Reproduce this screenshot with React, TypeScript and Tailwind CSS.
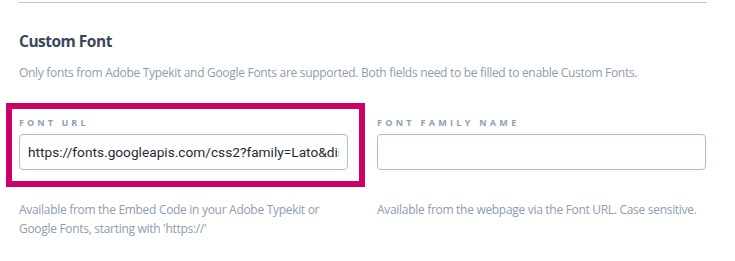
import React from "react";

const App = () => {
  return (
    <div className="relative w-[735px] h-[261px] bg-white overflow-hidden font-['Open_Sans',sans-serif]">
      <div className="pl-[19px] pr-[28px] pt-[2px]">
        {/* Divider */}
        <div className="h-px bg-[#b7c7d7]" />

        {/* Section heading */}
        <h2 className="mt-[28px] text-[15.5px] leading-[20px] font-bold text-[#384859] tracking-[-0.5px]">
          Custom Font
        </h2>
        <p className="mt-[12px] text-[12px] leading-[20px] text-[#8c9db0] tracking-[-0.3px]">
          Only fonts from Adobe Typekit and Google Fonts are supported. Both fields need to be filled to enable Custom Fonts.
        </p>

        {/* Fields */}
        <div className="mt-[34px] grid grid-cols-[329px_329px] gap-x-[29px]">
          <div className="flex flex-col">
            <label className="text-[9px] leading-[12px] font-bold tracking-[3.1px] text-[#8ca1b7]">
              FONT URL
            </label>
            <input
              readOnly
              value="https://fonts.googleapis.com/css2?family=Lato&display=swap"
              className="mt-[5px] h-[36px] w-full rounded-[4px] border border-[#aabfd3] px-[8px] text-[13.7px] text-[#1f2a37] font-['Roboto',sans-serif] outline-none"
            />
            <p className="mt-[30px] pr-[6px] text-[12px] leading-[19px] text-[#8c9db0] tracking-[-0.3px]">
              Available from the Embed Code in your Adobe Typekit or Google Fonts, starting with 'https://'
            </p>
          </div>
          <div className="flex flex-col">
            <label className="text-[9px] leading-[12px] font-bold tracking-[3.3px] text-[#8ca1b7]">
              FONT FAMILY NAME
            </label>
            <input
              readOnly
              value=""
              className="mt-[5px] h-[36px] w-full rounded-[4px] border border-[#aabfd3] px-[8px] text-[13.7px] text-[#1f2a37] font-['Roboto',sans-serif] outline-none"
            />
            <p className="mt-[30px] text-[12px] leading-[19px] text-[#8c9db0] tracking-[-0.3px]">
              Available from the webpage via the Font URL. Case sensitive.
            </p>
          </div>
        </div>
      </div>

      {/* Highlight annotation */}
      <div className="absolute left-[6px] top-[103px] w-[359px] h-[84px] border-[6px] border-[#cc0066] pointer-events-none" />
    </div>
  );
};

export default App;
